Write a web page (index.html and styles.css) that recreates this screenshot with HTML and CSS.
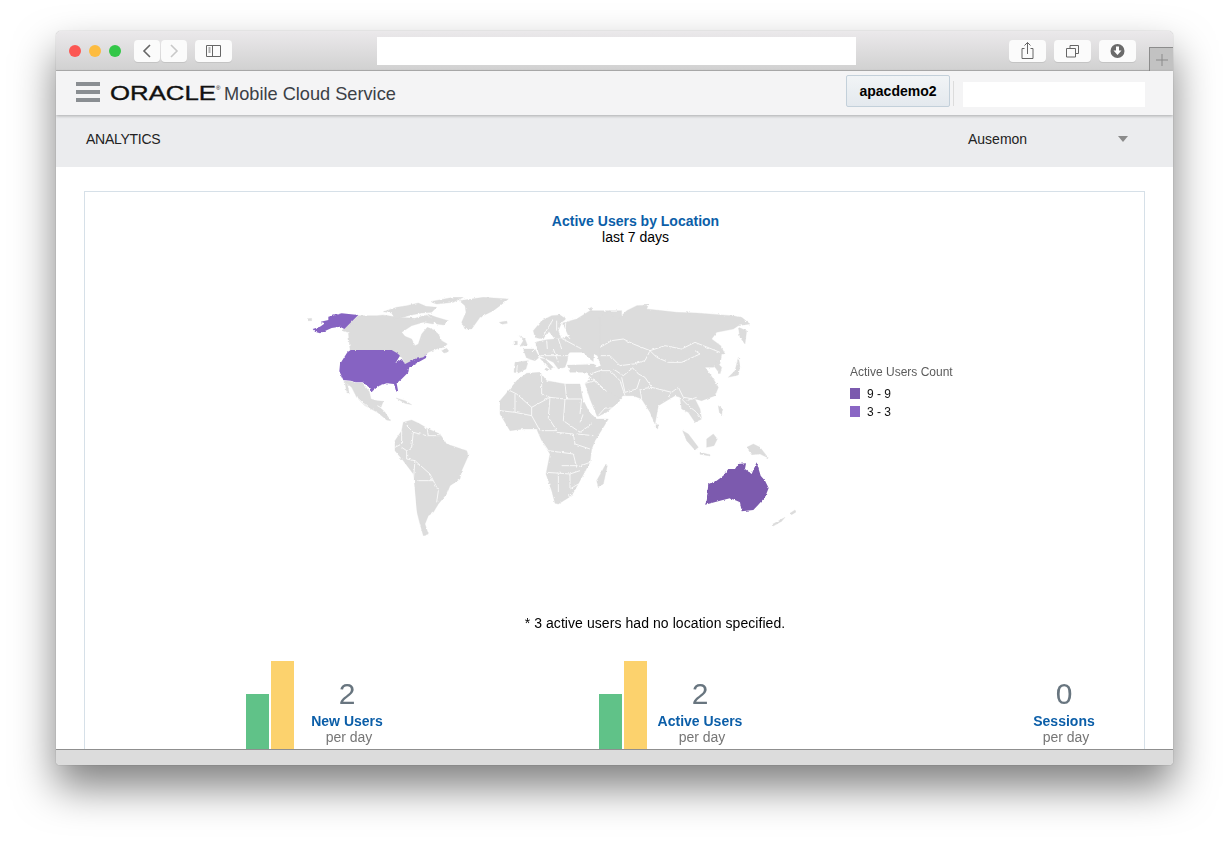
FILE: index.html
```html
<!DOCTYPE html>
<html lang="en">
<head>
<meta charset="utf-8">
<title>Oracle Mobile Cloud Service - Analytics</title>
<link rel="stylesheet" href="styles.css">
</head>
<body>
<div class="window">
  <div class="titlebar">
    <span class="light red"></span><span class="light amber"></span><span class="light green"></span>
    <span class="tb-btn nav first"><svg width="26" height="22" viewBox="0 0 26 22"><path class="ic" d="M16 5l-6 6 6 6"/></svg></span>
    <span class="tb-btn nav"><svg width="26" height="22" viewBox="0 0 26 22"><path class="ic faint" d="M10 5l6 6-6 6"/></svg></span>
    <span class="tb-btn wide side"><svg width="37" height="22" viewBox="0 0 37 22"><path class="ic thin" d="M11.500 5.500h14v11h-14zM17.500 5.500v11M13.500 8h2M13.500 10h2M13.500 12h2"/></svg></span>
    <span class="address"></span>
    <span class="tb-btn wide"><svg width="37" height="22" viewBox="0 0 37 22"><path class="ic thin" d="M15.500 8.500h-2.500v10h11v-10h-2.500M18.500 14V2.500M15.500 5.500l3-3 3 3"/></svg></span>
    <span class="tb-btn wide gap"><svg width="37" height="22" viewBox="0 0 37 22"><path class="ic thin" d="M16 8.500V5.500h8.500v8h-3M12.500 8.500h9v8.500h-9z"/></svg></span>
    <span class="tb-btn wide gap"><svg width="37" height="22" viewBox="0 0 37 22"><circle cx="18.500" cy="11" r="7" fill="#6a6a6a"/><path d="M17 6.500h3v4h2.500l-4 4.500-4-4.500H17z" fill="#fff"/></svg></span>
    <span class="newtab"><svg width="14" height="14" viewBox="0 0 14 14"><path class="ic thin plus" d="M7 1v12M1 7h12"/></svg></span>
  </div>

  <header class="appbar">
    <span class="burger"><i></i><i></i><i></i></span>
    <svg class="logo" width="112" height="20" viewBox="0 0 112 20"><text class="logo-text" x="0" y="17" textLength="106" lengthAdjust="spacingAndGlyphs">ORACLE</text><text class="logo-reg" x="106" y="7">®</text></svg>
    <span class="product">Mobile Cloud Service</span>
    <button class="tenant">apacdemo2</button>
    <span class="divider"></span>
    <span class="search"></span>
  </header>

  <div class="subbar">
    <span class="section">ANALYTICS</span>
    <span class="picker">Ausemon</span>
    <span class="caret"></span>
  </div>

  <main class="content">
    <section class="panel">
      <h2 class="title">Active Users by Location</h2>
      <p class="subtitle">last 7 days</p>
      <div class="maprow">
        <svg class="map" width="520" height="260" viewBox="0 0 520 260">
          <defs>
            <filter id="rough" x="0" y="0" width="100%" height="100%">
              <feTurbulence type="fractalNoise" baseFrequency=".3" numOctaves="2" seed="4"/>
              <feDisplacementMap in="SourceGraphic" scale="2.500" xChannelSelector="R" yChannelSelector="G"/>
            </filter>
          </defs>
          <g class="map-art">
          <g transform="translate(50 5) scale(.33333)">
            <g class="land">
              <path d="M55,80 L110,80 L130,78 L175,85 L225,88 L245,82 L260,78 L285,95 L280,105 L250,100 L215,110 L185,130 L195,142 L215,150 L225,170 L235,165 L245,135 L262,115 L280,122 L295,135 L305,155 L322,165 L312,175 L295,178 L265,190 L250,205 L225,212 L195,225 L185,205 L165,190 L150,183 L30,183 L25,130 L5,125 Z"/>
              <path d="M130,68 L170,55 L200,50 L235,42 L258,52 L290,55 L275,70 L245,72 L215,78 L165,90 L155,72 Z"/>
              <path d="M270,38 L340,25 L370,25 L340,40 L290,45 Z"/>
              <path d="M262,75 L290,85 L325,95 L310,108 L290,105 Z"/>
              <path d="M305,185 L320,178 L328,188 L312,192 Z"/>
              <path d="M358,35 L430,25 L505,30 L480,50 L460,65 L420,85 L395,120 L375,120 L365,100 L378,70 L375,50 Z"/>
              <path d="M478,100 L500,96 L502,103 L485,106 Z"/>
            </g>
          </g>
          <g transform="scale(.33333)">
            <g class="land">
              <path d="M160,290 L182,292 L200,297 L218,297 L238,323 L243,345 L262,350 L280,352 L272,372 L285,385 L302,410 L290,408 L262,385 L225,365 L200,340 L185,310 Z"/>
              <path d="M165,295 L172,300 L178,330 L170,325 Z"/>
              <path d="M318,342 L345,350 L365,362 L345,358 Z"/>
              <path d="M340,415 L365,408 L390,420 L415,435 L450,450 L470,480 L530,500 L535,515 L515,560 L510,585 L480,605 L470,630 L445,660 L430,685 L415,695 L405,720 L415,750 L400,755 L390,720 L380,680 L375,620 L370,570 L340,530 L315,500 L315,470 L335,440 Z"/>
              <path d="M52,104 L65,103 L65,110 L54,110 Z"/>
            </g>
            <path class="border" d="M315,490 L335,480 L335,440 M335,490 L350,500 L350,525 L375,530 L420,570 L430,590 L445,620 L440,655 M375,530 L370,590 L380,700 M385,590 L415,590 L430,590 M370,445 L365,490 L350,500 M350,425 L370,445 L410,455 L450,455 L445,430 M410,425 L415,455 M200,340 L240,375 M262,365 L280,375"/>
            <path class="usa" d="M172,205 L182,198 L305,198 L322,208 L330,215 L316,238 L335,225 L345,240 L375,225 L400,220 L410,210 L408,222 L385,235 L358,250 L355,265 L335,285 L320,298 L325,325 L318,322 L312,300 L290,298 L268,305 L245,323 L235,308 L218,295 L200,295 L182,290 L160,288 L148,262 L150,240 Z"/>
            <path class="usa" d="M68,135 L90,128 L105,118 L92,113 L115,108 L115,98 L155,88 L205,93 L163,135 L150,128 L125,132 L90,148 L75,143 Z"/>
          </g>
          <g transform="translate(200 15) scale(.33333)">
            <g class="land">
              <path d="M130,95 L155,65 L185,50 L210,48 L228,60 L215,70 L205,95 L212,115 L195,120 L175,95 L160,120 L135,115 Z"/>
              <path d="M88,110 L105,120 L112,138 L90,142 L100,125 Z"/>
              <path d="M72,128 L82,126 L82,137 L72,137 Z"/>
              <path d="M100,150 L135,150 L148,175 L135,185 L110,178 L105,165 Z"/>
              <path d="M75,190 L115,185 L108,210 L85,222 L72,220 Z"/>
              <path d="M135,130 L170,122 L215,118 L235,110 L218,72 L260,60 L300,35 L395,35 L395,195 L320,195 L300,180 L280,160 L240,160 L235,165 L232,185 L225,205 L205,210 L190,190 L165,178 L148,170 Z"/>
              <path d="M150,178 L165,180 L190,205 L180,210 Z"/>
              <path d="M232,198 L300,195 L320,195 L395,195 L395,300 L330,300 L300,240 L290,220 L240,220 Z"/>
              <path d="M165,205 L178,212 L170,216 Z"/>
            </g>
          </g>
          <g transform="translate(310 15) scale(.33333)">
            <g class="land">
              <path d="M0,55 L30,35 L35,50 L55,60 L80,35 L110,20 L145,18 L140,30 L230,40 L290,42 L395,50 L425,55 L450,75 L415,80 L400,90 L350,100 L335,120 L362,140 L375,165 L365,165 L360,195 L340,205 L315,205 L330,225 L340,240 L355,265 L345,290 L305,305 L285,300 L300,330 L305,360 L285,370 L265,340 L245,330 L240,295 L225,290 L200,305 L175,320 L165,375 L150,340 L125,300 L100,290 L70,290 L50,300 L55,310 L35,325 L0,345 Z"/>
              <path d="M415,85 L440,95 L435,135 L420,115 Z"/>
              <path d="M415,175 L420,200 L415,228 L385,235 L405,215 Z"/>
              <path d="M345,185 L365,205 L360,225 L345,205 Z"/>
            </g>
          </g>
          <g transform="translate(200 0) scale(.33333)">
            <g class="land">
              <path d="M30,350 L60,315 L80,290 L110,268 L150,265 L170,290 L225,300 L270,300 L278,345 L298,385 L320,405 L355,405 L340,430 L315,470 L305,495 L300,535 L270,590 L245,635 L205,660 L195,658 L185,620 L168,570 L180,510 L155,470 L140,435 L100,435 L60,440 L30,390 Z"/>
              <path d="M345,545 L352,545 L340,600 L325,608 L320,590 Z"/>
              <path d="M285,298 L305,285 L345,315 L385,340 L390,350 L350,385 L322,398 L300,345 Z"/>
              <path d="M685,365 L698,375 L695,392 L688,385 Z"/>
              <path d="M578,440 L595,450 L625,490 L615,498 L590,470 Z"/>
              <path d="M650,465 L670,450 L682,465 L672,485 L650,490 Z"/>
              <path d="M630,505 L660,512 L660,516 L630,511 Z"/>
              <path d="M770,490 L790,480 L810,490 L835,522 L810,510 L785,512 Z"/>
              <path d="M498,418 L505,425 L503,435 L498,430 Z"/>
              <path d="M845,722 L885,700 L875,712 L850,726 Z"/>
              <path d="M900,688 L915,678 L918,684 L905,692 Z"/>
              <path d="M295,75 L305,70 L305,82 Z"/>
            </g>
            <path class="border" d="M60,320 L80,330 L125,370 L180,340 L225,345 L275,345 M155,270 L155,330 L180,340 M225,300 L230,345 M275,345 L270,390 M75,330 L75,385 L30,380 M125,370 L125,395 L75,385 M125,395 L150,440 M180,340 L175,400 L200,440 L155,440 M225,345 L220,410 L270,445 L305,420 M280,390 L270,415 M200,445 L250,450 L255,480 L300,495 M155,470 L175,500 L250,510 M170,565 L240,570 L270,560 M205,570 L205,625 M250,510 L260,550 L300,535 M215,545 L260,545 M310,455 L260,450 M240,570 L240,615 L265,600 M285,298 L315,290 L350,322 M322,398 L345,372 L368,372"/>
            <circle class="border" cx="240" cy="635" r="4"/>
            <path class="aus" d="M645,662 L650,650 L655,600 L680,590 L700,575 L715,555 L735,555 L745,540 L768,538 L765,555 L785,570 L800,535 L812,575 L825,590 L836,612 L825,640 L805,662 L790,678 L755,682 L750,655 L740,650 L720,643 L690,650 L665,657 Z"/>
          </g>
          <g transform="translate(200 15) scale(.33333)">
            <path class="sea" d="M240,165 L280,165 L288,190 L240,194 Z"/>
            <path class="sea" d="M312,165 L322,170 L332,200 L318,205 L310,190 Z"/>
            <path class="border" d="M160,110 L190,60 M200,65 L200,95 M135,130 L148,175 M170,125 L172,150 M205,120 L215,150 M215,118 L275,150 M150,170 L235,170 M190,150 L205,190 M215,95 L235,115 M228,60 L225,100 L240,120 M232,196 L300,195 M285,185 L320,195 M82,195 L80,222 M125,160 L135,150 M300,225 L330,215 M290,225 L340,270"/>
          </g>
          <g transform="translate(310 15) scale(.33333)">
            <path class="border" d="M0,145 L35,125 L70,120 L100,135 L150,155 L195,140 L245,150 L285,130 L310,140 L360,160 M150,155 L170,175 L205,190 L245,190 L300,165 L285,155 M0,170 L30,170 L60,200 L100,195 L135,185 L150,155 M40,210 L70,230 L100,205 L115,225 L135,235 L155,265 L215,280 L235,265 L250,295 L280,300 M65,235 L75,280 L110,270 L120,240 M125,300 L120,270 L155,265 M215,280 L205,295 L235,320 M245,300 L265,320 L290,340 L305,360 M260,305 L290,295 M0,215 L30,215 L60,245 L75,290"/>
          </g>
          </g>
        </svg>
        <div class="legend">
          <div class="legend-title">Active Users Count</div>
          <div class="legend-item"><span class="swatch dark"></span>9 - 9</div>
          <div class="legend-item"><span class="swatch light-purple"></span>3 - 3</div>
        </div>
      </div>
      <p class="footnote">* 3 active users had no location specified.</p>
      <div class="stats">
        <div class="stat">
          <div class="bars"><span class="bar short"></span><span class="bar tall"></span></div>
          <div class="stat-text"><div class="num">2</div><div class="label">New Users</div><div class="per">per day</div></div>
        </div>
        <div class="stat">
          <div class="bars"><span class="bar short"></span><span class="bar tall"></span></div>
          <div class="stat-text"><div class="num">2</div><div class="label">Active Users</div><div class="per">per day</div></div>
        </div>
        <div class="stat plain">
          <div class="stat-text"><div class="num">0</div><div class="label">Sessions</div><div class="per">per day</div></div>
        </div>
      </div>
    </section>
  </main>
  <div class="statusbar"></div>
</div>
</body>
</html>
```
FILE: styles.css
```css
* { box-sizing: border-box; }
html, body { margin: 0; height: 100%; background: #fff; overflow: hidden; }
body { font-family: "Liberation Sans", Arial, sans-serif; color: #000; }

.window {
  width: 1117px; height: 734px; margin: 31px 0 0 56px;
  display: flex; flex-direction: column;
  border-radius: 5px 5px 4px 4px;
  box-shadow: 0 0 1px rgba(0,0,0,.45), 0 22px 42px rgba(0,0,0,.5);
  overflow: hidden;
}

/* Browser chrome */
.titlebar {
  flex: 0 0 40px; display: flex; align-items: flex-start;
  padding: 9px 0 0 13px;
  background: linear-gradient(#ebe9eb, #d1d1d1);
  border-bottom: 1px solid #b0b0b0;
}
.light { flex: none; width: 12px; height: 12px; border-radius: 50%; margin: 5px 8px 0 0; }
.red { background: #fc5753; }
.amber { background: #fdbc40; }
.green { background: #33c748; }
.tb-btn {
  height: 22px; background: #fbfbfb; border-radius: 4px;
  box-shadow: 0 1px 0 #c4c4c4; display: block; flex: none;
}
.tb-btn svg { display: block; }
.nav { width: 26px; margin-left: 1px; }
.nav.first { margin-left: 5px; }
.wide { width: 37px; }
.side { margin-left: 8px; }
.gap { margin-left: 8px; }
.address { flex: none; width: 479px; height: 28px; margin: -3px 153px 0 145px; background: #fff; }
.newtab {
  flex: none; align-self: flex-end; width: 25px; height: 24px; margin: 0 0 -1px 13px;
  background: #c2c2c2; border: 1px solid #8c8c8c; border-bottom: 0; border-right: 0;
  display: flex; align-items: center; justify-content: center;
}
.ic { fill: none; stroke: #666; stroke-width: 1.6; }
.ic.faint { stroke: #c8c8c8; }
.ic.thin { stroke-width: 1; }
.ic.plus { stroke: #8a8a8a; }

/* Application header */
.appbar {
  flex: 0 0 44px; display: flex; align-items: flex-start;
  background: #f4f4f5; position: relative;
  box-shadow: 0 1px 3px rgba(0,0,0,.28);
}
.burger { display: flex; flex-direction: column; gap: 4px; width: 24px; margin: 11px 0 0 20px; flex: none; }
.burger i { display: block; height: 4px; background: #8a8e92; }
.logo { margin: 12px 0 0 10px; flex: none; }
.logo-text { font: 20px "Liberation Sans", sans-serif; fill: #111; stroke: #111; stroke-width: .35; }
.logo-reg { font: 6px "Liberation Sans", sans-serif; fill: #111; }
.product { font-size: 18.200px; line-height: 24px; color: #3b4046; margin: 11px 0 0 2px; width: 622px; flex: none; }
.tenant {
  width: 104px; height: 32px; margin: 4px 0 0 0; padding: 0; flex: none;
  font: bold 14px "Liberation Sans", sans-serif; color: #000;
  background: linear-gradient(#f1f4f6, #e4e9ee);
  border: 1px solid #c3d0da; border-radius: 2px;
}
.divider { width: 1px; height: 25px; margin: 10px 0 0 3px; background: #dcdcdc; flex: none; }
.search { width: 182px; height: 25px; margin: 11px 0 0 9px; background: #fff; flex: none; }

.subbar {
  flex: 0 0 52px; display: flex; align-items: center;
  padding: 0 0 4px 30px; background: #ebecee; font-size: 14px; color: #222;
}
.section { width: 882px; letter-spacing: -.27px; }
.picker { width: 150px; }
.caret { width: 0; height: 0; border: 5px solid transparent; border-top: 6px solid #8b8b8b; border-bottom: 0; }

/* Content */
.content { flex: 1; min-height: 0; overflow: hidden; background: #fff; padding: 24px 28px 0; }
.panel { border: 1px solid #d6e0e8; border-bottom: 0; height: 620px; padding-top: 21px; text-align: center; }
.title { margin: 0 0 0 42px; font-size: 14px; line-height: 16px; font-weight: bold; color: #0b5ea8; }
.subtitle { margin: 0 0 0 42px; font-size: 14px; line-height: 16px; }
.maprow { display: flex; align-items: flex-start; margin: 39px 0 0 205px; text-align: left; }
.map { flex: none; display: block; }
.map-art { filter: url(#rough); }
.land path { fill: #dcdcdc; stroke: #dcdcdc; stroke-width: 1; stroke-linejoin: round; }
.sea { fill: #fff; }
.border { fill: none; stroke: #fff; stroke-width: 2.400; stroke-linejoin: round; }
.usa { fill: #8663c2; }
.aus { fill: #7b5aae; }
.legend { margin: 81px 0 0 40px; font-size: 12px; }
.legend-title { color: #5c5c5c; line-height: 14px; margin-bottom: 9px; }
.legend-item { display: flex; align-items: center; height: 11px; margin-bottom: 7px; color: #111; }
.swatch { width: 10px; height: 11px; margin-right: 7px; }
.swatch.dark { background: #7b5aae; }
.swatch.light-purple { background: #8a66c4; }
.footnote { margin: 71px 0 0 81px; font-size: 14px; line-height: 16px; letter-spacing: .07px; }
.stats { display: grid; grid-template-columns: 353px 353px 1fr; margin: 30px 0 0 161px; }
.stat { display: flex; align-items: flex-start; }
.plain { padding-left: 59px; }
.bars { display: flex; align-items: flex-end; gap: 2px; width: 48px; height: 88px; }
.bar { width: 23px; display: block; }
.short { height: 55px; background: #60c288; }
.tall { height: 88px; background: #fcd26d; }
.stat-text { width: 106px; padding-top: 17px; text-align: center; }
.num { font-size: 30px; line-height: 32px; color: #68757f; }
.label { font-size: 14px; line-height: 16px; font-weight: bold; color: #0b5ea8; margin-top: 3px; }
.per { font-size: 14px; line-height: 16px; color: #767676; padding-left: 4px; }

.statusbar { flex: 0 0 16px; background: #dcdcdc; border-top: 1px solid #8f8f8f; position: relative; }
```
